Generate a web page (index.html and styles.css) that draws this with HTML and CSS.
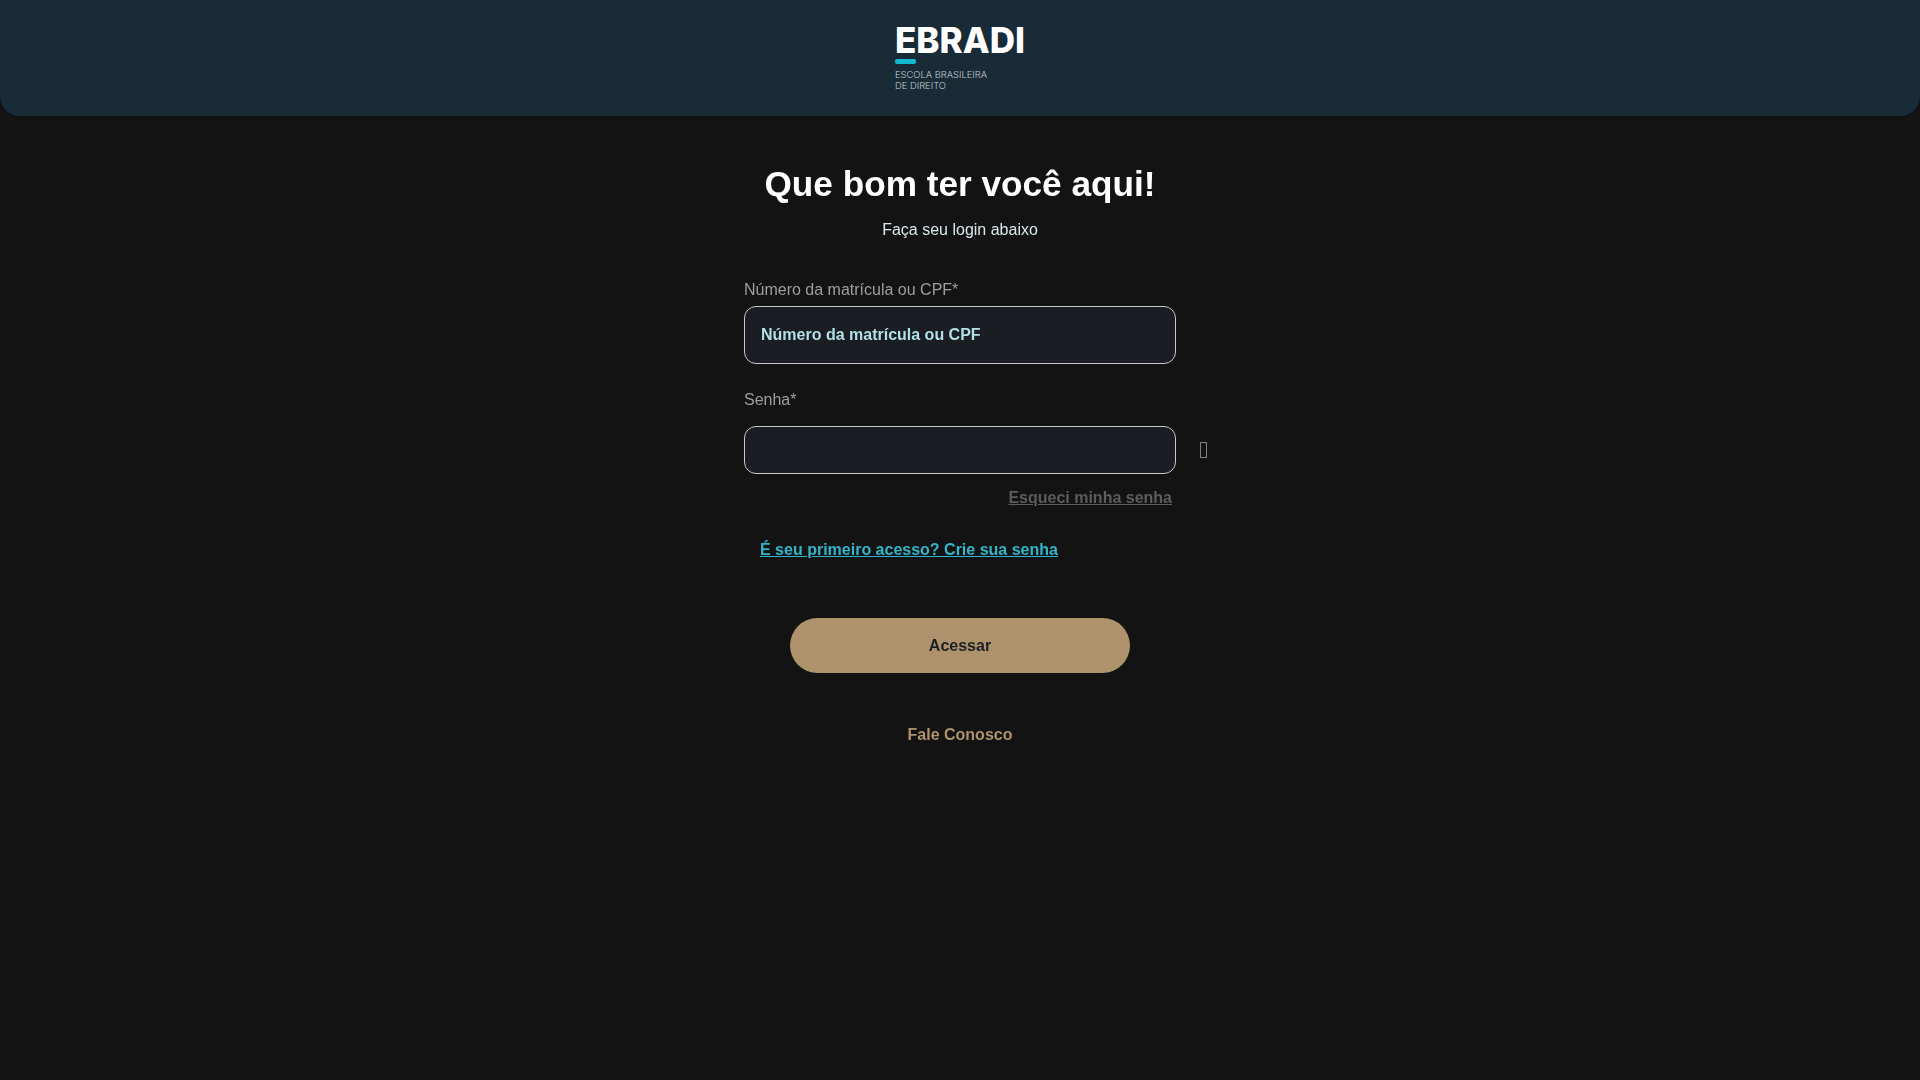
FILE: index.html
```html
<!DOCTYPE html>
<html lang="pt-BR">
<head>
  <meta charset="UTF-8" />
  <meta name="viewport" content="width=device-width, initial-scale=1.0" />
  <title>EBRADI - Login</title>
  <link rel="stylesheet" href="styles.css">
</head>
<body>
  <header class="topbar">
    <div class="logo">
      <div class="logo-name">EBRADI</div>
      <div class="logo-bar"></div>
      <div class="logo-sub">ESCOLA BRASILEIRA<br>DE DIREITO</div>
    </div>
  </header>
  <main class="login">
    <h1>Que bom ter você aqui!</h1>
    <p class="subtitle">Faça seu login abaixo</p>
    <form class="form">
      <label class="label" for="matricula">Número da matrícula ou CPF*</label>
      <input class="input input-tall" id="matricula" type="text" placeholder="Número da matrícula ou CPF">
      <label class="label label-senha" for="senha">Senha*</label>
      <div class="password-row">
        <input class="input" id="senha" type="password">
        <span class="eye"></span>
      </div>
      <div class="forgot-row"><a class="forgot" href="#">Esqueci minha senha</a></div>
      <a class="first-access" href="#">É seu primeiro acesso? Crie sua senha</a>
      <button class="submit" type="button">Acessar</button>
      <a class="contact" href="#">Fale Conosco</a>
    </form>
  </main>
</body>
</html>
```

FILE: styles.css
```css
* {
  box-sizing: border-box;
}

body {
  margin: 0;
  min-height: 100vh;
  background-color: #131313;
  color: #fff;
  font-family: "Liberation Sans", Arial, sans-serif;
}

.topbar {
  height: 116px;
  background-color: #182b37;
  border-radius: 0 0 20px 20px;
  display: flex;
  justify-content: center;
  padding-top: 24px;
  will-change: opacity;
}

.logo {
  width: 130px;
}

.logo-name {
  font-family: Inter, sans-serif;
  font-size: 35px;
  font-weight: 800;
  line-height: 32px;
  letter-spacing: 0;
  color: #fff;
}

.logo-bar {
  width: 21px;
  height: 5px;
  margin-top: 3px;
  border-radius: 2px;
  background-color: #13b9cf;
}

.logo-sub {
  margin-top: 5px;
  font-family: Inter, sans-serif;
  font-size: 9.4px;
  font-weight: 300;
  line-height: 11px;
  color: #c4cbd0;
}

.login {
  display: flex;
  flex-direction: column;
  align-items: center;
  padding-top: 46px;
  will-change: opacity;
}

h1 {
  margin: 0;
  font-size: 35.2px;
  line-height: 44px;
  font-weight: 700;
}

.subtitle {
  margin: 14px 0 0;
  font-size: 16px;
  line-height: 20px;
  color: #d8e8eb;
}

.form {
  width: 432px;
  margin-top: 40px;
  display: flex;
  flex-direction: column;
}

.label {
  font-size: 16px;
  line-height: 20px;
  color: #9e9e9e;
}

.label-senha {
  margin-top: 26px;
}

.input {
  display: block;
  width: 100%;
  height: 48px;
  padding: 0 16px;
  background-color: #1a1e23;
  border: 1px solid #c8c8c8;
  border-radius: 12px;
  color: #fff;
  font-family: inherit;
  font-size: 16px;
  font-weight: 700;
}

.input::placeholder {
  color: #b2dfe6;
  opacity: 1;
}

.input-tall {
  height: 58px;
  margin-top: 6px;
}

.password-row {
  position: relative;
  margin-top: 16px;
}

.eye {
  position: absolute;
  left: 456px;
  top: 16px;
  width: 7px;
  height: 16px;
  border: 1px solid #808080;
}

.forgot-row {
  display: flex;
  justify-content: flex-end;
  padding-right: 4px;
  margin-top: 14px;
}

.forgot {
  font-size: 16px;
  line-height: 20px;
  font-weight: 700;
  color: #5c5c5c;
}

.first-access {
  margin: 32px 0 0 16px;
  font-size: 16px;
  line-height: 20px;
  font-weight: 700;
  color: #33b5c9;
}

.submit {
  width: 340px;
  height: 55px;
  margin: 58px auto 0;
  border: none;
  border-radius: 28px;
  background-color: #ad926b;
  color: #1c1f24;
  font-family: inherit;
  font-size: 16px;
  font-weight: 700;
}

.contact {
  margin-top: 52px;
  text-align: center;
  font-size: 16px;
  line-height: 20px;
  font-weight: 700;
  color: #ad926b;
  text-decoration: none;
}
```
